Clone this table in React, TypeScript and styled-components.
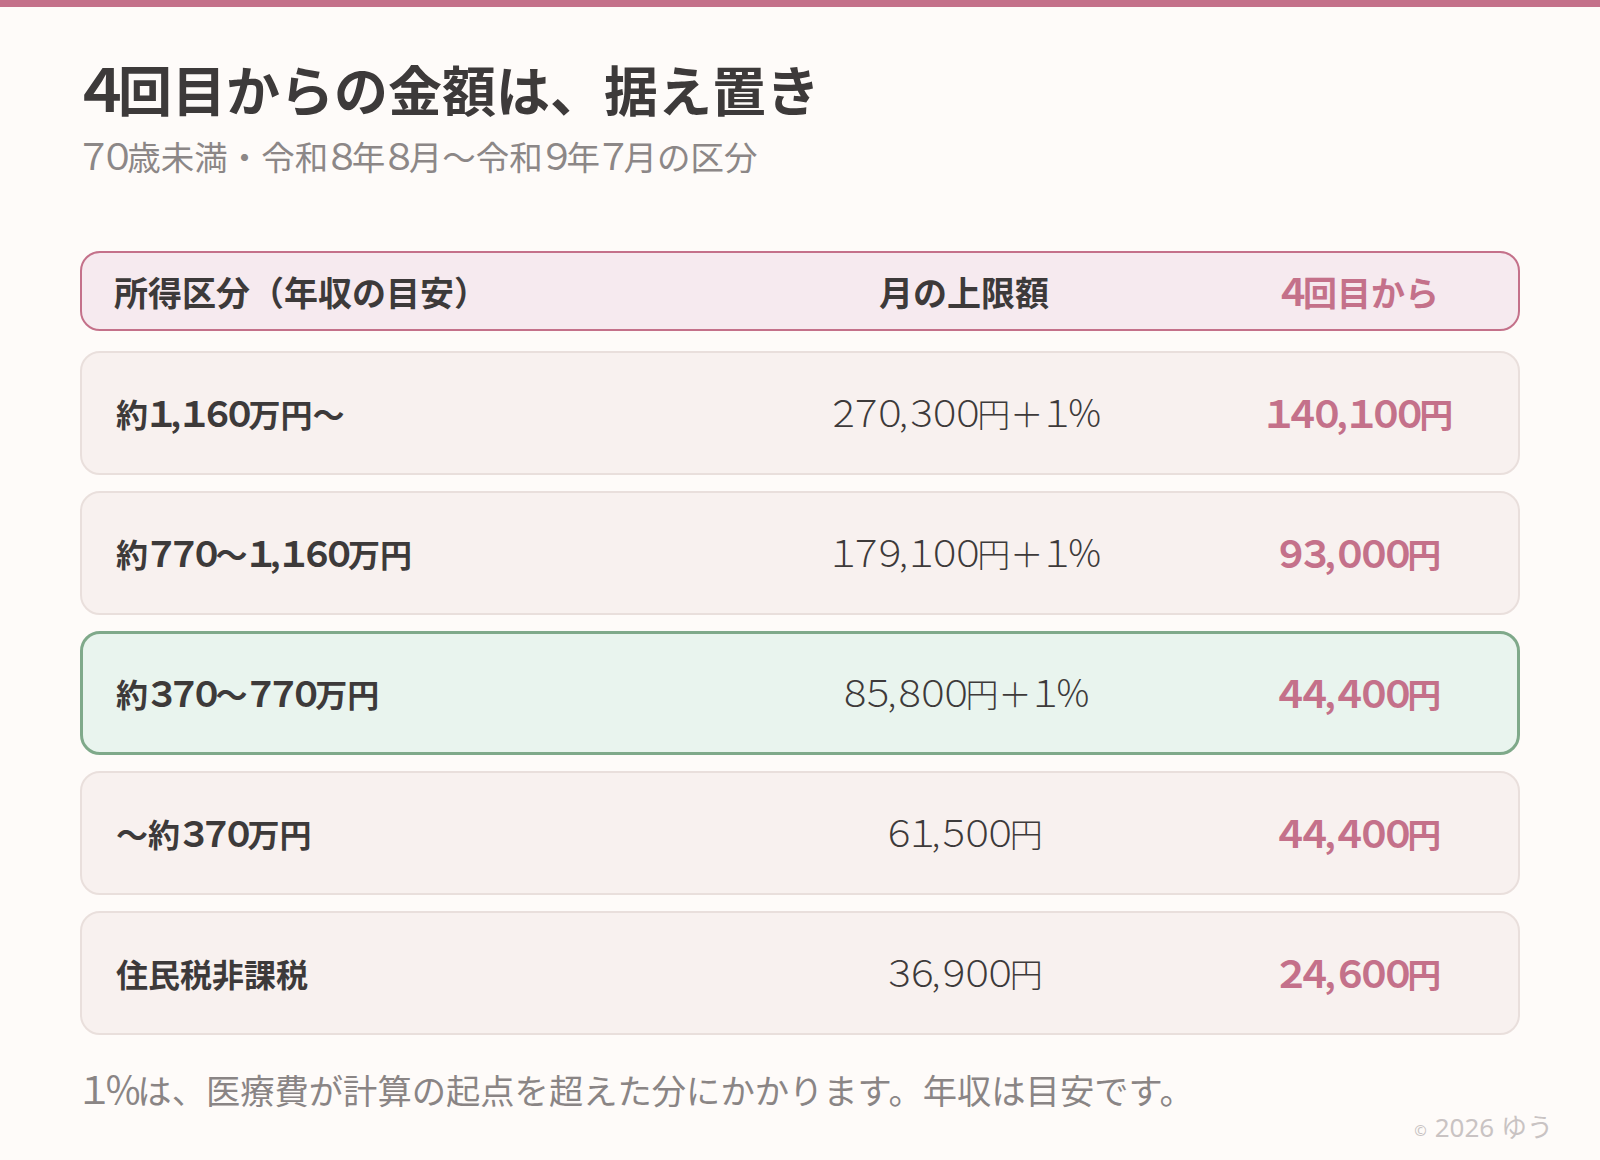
import React from "react";
import styled, { createGlobalStyle } from "styled-components";

const GlobalStyle = createGlobalStyle`
  html, body {
    margin: 0;
    padding: 0;
    background: #fefbf9;
  }
  body {
    font-family: "Noto Sans CJK JP", "Noto Sans", sans-serif;
    color: #3d3a3a;
  }
`;

const Page = styled.div`
  position: relative;
  width: 1600px;
  min-height: 1160px;
  background: #fefbf9;
  overflow: hidden;
`;

const TopBar = styled.div`
  height: 7px;
  background: #c4718a;
`;

const Content = styled.main`
  padding: 44px 80px 0;
  display: flex;
  flex-direction: column;
`;

/* Japanese-style proportional figures: full-width glyph design, tightly spaced */
const Fig = styled.span`
  font-family: "Noto Sans CJK JP", sans-serif;
  font-variant-east-asian: full-width;
  font-feature-settings: "palt" 1;
  font-size: 1.1em;
  letter-spacing: -0.12em;
  line-height: 1;
`;

const Title = styled.h1`
  margin: 0;
  font-size: 54px;
  line-height: 1.4;
  font-weight: 700;
  color: #3d3a3a;
`;

const Subtitle = styled.p`
  margin: 6px 0 0;
  font-size: 33.5px;
  line-height: 1.4;
  font-weight: 400;
  color: #8c8787;
`;

const Table = styled.div`
  margin-top: 72px;
  display: flex;
  flex-direction: column;
  gap: 16px;
`;

const Grid = styled.div`
  display: grid;
  grid-template-columns: 1fr 540px 250px;
  align-items: center;
  box-sizing: border-box;
`;

const HeaderRow = styled(Grid)`
  height: 80px;
  padding: 0 34px 0 32px;
  border: 2px solid #c4718a;
  border-radius: 20px;
  background: #f6eaef;
  margin-bottom: 4px;
`;

const HeadCell = styled.div<{ $align: "left" | "center"; $accent?: boolean }>`
  font-size: 34px;
  font-weight: 700;
  text-align: ${(p) => p.$align};
  color: ${(p) => (p.$accent ? "#c4718a" : "#3d3a3a")};
`;

const Row = styled(Grid)<{ $highlight?: boolean }>`
  height: 124px;
  padding: 0 ${(p) => (p.$highlight ? 33 : 34)}px;
  border: ${(p) => (p.$highlight ? "3px solid #7fa98a" : "2px solid #e9dfdc")};
  border-radius: 20px;
  background: ${(p) => (p.$highlight ? "#e9f4ee" : "#f8f1ef")};
`;

const Label = styled.div`
  font-size: 32px;
  font-weight: 700;
  color: #3d3a3a;
`;

const Limit = styled.div`
  font-size: 33px;
  font-weight: 300;
  text-align: center;
  color: #3d3a3a;
`;

const After = styled.div`
  font-size: 34px;
  font-weight: 700;
  text-align: center;
  color: #c4718a;
`;

const Note = styled.p`
  margin: 30px 0 0;
  font-size: 34.3px;
  line-height: 1.4;
  font-weight: 400;
  color: #8a8585;
`;

const Credit = styled.div`
  position: absolute;
  right: 47px;
  bottom: 20px;
  font-family: "Noto Sans", "Noto Sans CJK JP", sans-serif;
  font-size: 26px;
  line-height: 1;
  font-weight: 400;
  color: #c9c3c3;
`;

const Copy = styled.span`
  font-size: 15px;
  vertical-align: middle;
  margin-right: 8px;
`;

function Num({ text }: { text: string }) {
  const parts = text.split(/([0-9%]+)/);
  return (
    <>
      {parts.map((part, i) =>
        /^[0-9%]+$/.test(part) ? <Fig key={i}>{part}</Fig> : <React.Fragment key={i}>{part}</React.Fragment>
      )}
    </>
  );
}

type RowData = { label: string; limit: string; after: string; highlight?: boolean };

const rows: RowData[] = [
  { label: "約1,160万円〜", limit: "270,300円＋1%", after: "140,100円" },
  { label: "約770〜1,160万円", limit: "179,100円＋1%", after: "93,000円" },
  { label: "約370〜770万円", limit: "85,800円＋1%", after: "44,400円", highlight: true },
  { label: "〜約370万円", limit: "61,500円", after: "44,400円" },
  { label: "住民税非課税", limit: "36,900円", after: "24,600円" },
];

export default function App() {
  return (
    <Page>
      <GlobalStyle />
      <TopBar />
      <Content>
        <Title>
          <Num text="4回目からの金額は、据え置き" />
        </Title>
        <Subtitle>
          <Num text="70歳未満・令和8年8月〜令和9年7月の区分" />
        </Subtitle>
        <Table>
          <HeaderRow>
            <HeadCell $align="left">所得区分（年収の目安）</HeadCell>
            <HeadCell $align="center">月の上限額</HeadCell>
            <HeadCell $align="center" $accent>
              <Num text="4回目から" />
            </HeadCell>
          </HeaderRow>
          {rows.map((r) => (
            <Row key={r.label} $highlight={r.highlight}>
              <Label>
                <Num text={r.label} />
              </Label>
              <Limit>
                <Num text={r.limit} />
              </Limit>
              <After>
                <Num text={r.after} />
              </After>
            </Row>
          ))}
        </Table>
        <Note>
          <Num text="1%は、医療費が計算の起点を超えた分にかかります。年収は目安です。" />
        </Note>
      </Content>
      <Credit>
        <Copy>©</Copy>2026 ゆう
      </Credit>
    </Page>
  );
}
